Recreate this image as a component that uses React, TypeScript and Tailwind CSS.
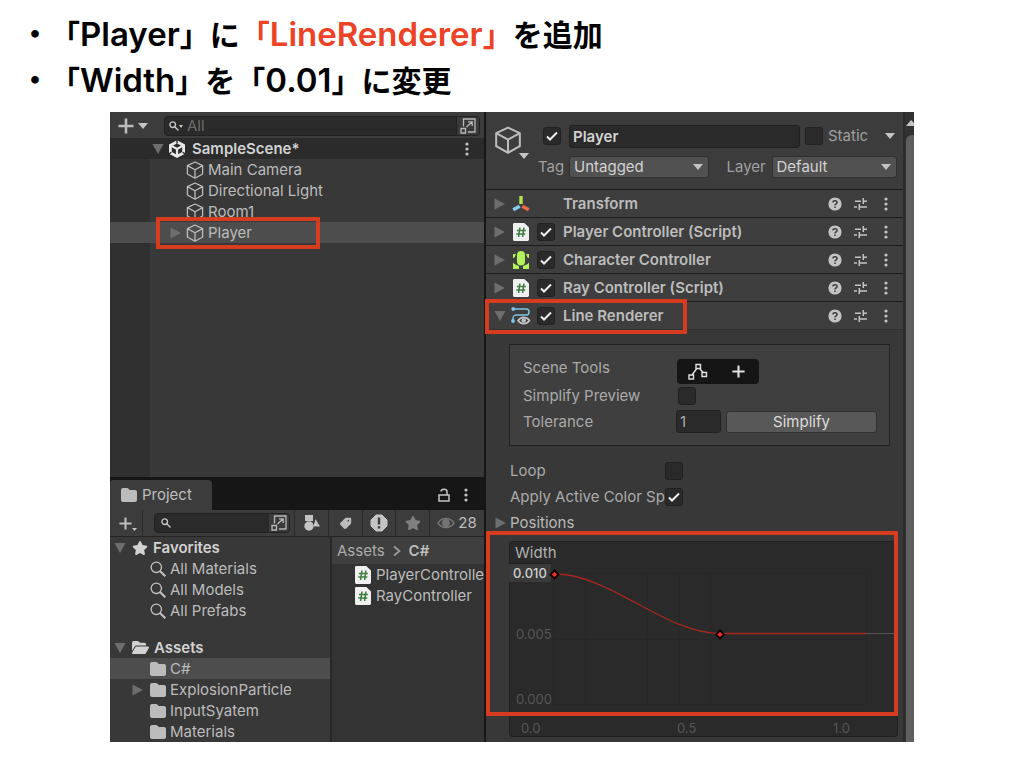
import type { ReactNode } from "react";
import { FaFolder, FaFolderOpen, FaStar, FaTag } from "react-icons/fa6";

type IconProps = { className?: string };

type Component = {
  name: string;
  icon: ReactNode;
  toggle: boolean;
  open?: boolean;
};

const Cube = ({ className = "size-[18px]" }: IconProps) => (
  <svg viewBox="0 0 18 18" className={`shrink-0 ${className}`} fill="none" stroke="currentColor" strokeWidth="1.3" strokeLinejoin="round">
    <path d="M9 1 16.6 4.6V13L9 17.2 1.4 13V4.6ZM1.4 4.6 9 8.8l7.6-4.2M9 8.8v8.4" />
  </svg>
);

const Arrow = ({ open = false }: { open?: boolean }) => (
  <svg viewBox="0 0 12 12" className="size-3 shrink-0 fill-[#6e6e6e]">
    <path d={open ? "M.5 1h11L6 11z" : "M.5 .5v11L11 6z"} />
  </svg>
);

const Caret = ({ className = "" }: IconProps) => (
  <svg viewBox="0 0 10 6" className={`w-[10px] h-[6px] shrink-0 fill-[#c4c4c4] ${className}`}>
    <path d="M0 0h10L5 6z" />
  </svg>
);

const Plus = ({ className = "size-4" }: IconProps) => (
  <svg viewBox="0 0 16 16" className={`shrink-0 ${className}`} stroke="currentColor" strokeWidth="2.6">
    <path d="M8 .5v15M.5 8h15" />
  </svg>
);

const Kebab = () => (
  <svg viewBox="0 0 4 14" className="w-1 h-[14px] shrink-0 fill-[#c4c4c4]">
    <circle cx="2" cy="2" r="1.6" />
    <circle cx="2" cy="7" r="1.6" />
    <circle cx="2" cy="12" r="1.6" />
  </svg>
);

const Presets = () => (
  <svg viewBox="0 0 14 14" className="size-[14px] shrink-0" stroke="#c4c4c4" strokeWidth="1.5">
    <path d="M1 4.2h6M9.3 4.2H13M9.3 1v6M0 10h3M5.3 10H13M5.3 7v6" />
  </svg>
);

const Help = () => (
  <svg viewBox="0 0 14 14" className="size-[14px] shrink-0">
    <circle cx="7" cy="7" r="6.6" fill="#c4c4c4" />
    <path d="M4.9 5.4C5 3.2 9.1 3.2 9.1 5.5 9.1 6.9 7 6.9 7 8.5M7 9.5v1.6" fill="none" stroke="#3e3e3e" strokeWidth="1.5" />
  </svg>
);

const UnityLogo = () => (
  <svg viewBox="0 0 18 18" className="size-[18px] shrink-0" fill="none">
    <path d="M9 1.8 15.6 5.4v7.4L9 16.4l-6.600-3.600V5.400z" stroke="#e8e8e8" strokeWidth="2.800" />
    <path d="M3 5.600 9 9l6-3.400M9 9v7" stroke="#e8e8e8" strokeWidth="2.200" />
    <path d="M9 0v3.400M0 14.200l3.400-1.800M18 14.200l-3.400-1.800" stroke="#2b2b2b" strokeWidth="1.400" />
  </svg>
);

const ScriptIcon = () => (
  <svg viewBox="0 0 18 20" className="w-[18px] h-5 shrink-0">
    <path d="M2.5 1h9.8L17 5.4V17.6A1.4 1.4 0 0 1 15.6 19H2.5A1.4 1.4 0 0 1 1 17.6V2.4A1.4 1.4 0 0 1 2.5 1z" fill="#f0f0f0" />
    <path d="M7.9 5.5 6.6 15M11.9 5.5 10.6 15M4.9 8.4h9M4.3 12h9" stroke="#3c7d3e" strokeWidth="1.5" />
  </svg>
);

const TransformIcon = () => (
  <svg viewBox="0 0 18 18" className="size-[18px] shrink-0" strokeWidth="3.4">
    <path d="M9 1v8" stroke="#b4e34d" />
    <path d="m7.7 11.2-6.5 3.6" stroke="#85cdf2" />
    <path d="m10.3 11.2 6.5 3.6" stroke="#ee6b43" />
  </svg>
);

const CharacterIcon = () => (
  <svg viewBox="0 0 18 20" className="w-[18px] h-5 shrink-0 fill-[#b4f25c]">
    <rect x="5" y="1" width="8" height="14.500" rx="4" />
    <path d="M1 4h3L2.6 7.4 1 8zM17 4h-3l1.4 3.4L17 8zM1 12.500l1.400 1.500 4.600 2v3H1zM17 12.500l-1.400 1.500-4.600 2v3h6z" />
  </svg>
);

const LineIcon = () => (
  <svg viewBox="0 0 20 20" className="size-5 shrink-0" fill="none">
    <path d="M2 3h13.5c3.3 0 3.3 6 0 6H5C2.4 9 1.9 10.5 1.9 14.5" stroke="#7fc4ea" strokeWidth="1.5" />
    <circle cx="2.2" cy="3" r="1.9" fill="#7fc4ea" />
    <circle cx="2" cy="15" r="1.9" fill="#7fc4ea" />
    <path d="M7 14.5c3-4.3 8.500-4.300 11.500 0-3 4.300-8.500 4.300-11.500 0z" fill="#3e3e3e" stroke="#c4c4c4" strokeWidth="1.700" />
    <circle cx="12.7" cy="14.5" r="2.2" fill="#c4c4c4" />
  </svg>
);

const Search = ({ className = "size-[10px]" }: IconProps) => (
  <svg viewBox="0 0 10 10" className={`shrink-0 ${className}`} fill="none" stroke="#c4c4c4" strokeWidth="1.4">
    <circle cx="3.7" cy="3.7" r="2.8" />
    <path d="m5.8 5.8 3.7 3.7" />
  </svg>
);

const Magnifier = () => (
  <svg viewBox="0 0 16 16" className="size-4 shrink-0" fill="none" stroke="#c4c4c4">
    <circle cx="6.3" cy="6.3" r="5.2" strokeWidth="1.3" />
    <path d="m10 10 5.3 5.3" strokeWidth="2" />
  </svg>
);

const Popout = () => (
  <svg viewBox="0 0 16 16" className="size-4 shrink-0" fill="none" stroke="#b8b8b8" strokeWidth="1.3">
    <path d="M3.5 8.5V1H15v13H8M1 10.5h4.5V15H1zM6.5 9 12 4M8 3.8h4.2V8" />
  </svg>
);

const Check = ({ label, checked = false }: { label: string; checked?: boolean }) => (
  <span className="relative flex size-[18px] shrink-0">
    <input
      type="checkbox"
      aria-label={label}
      defaultChecked={checked}
      className="peer size-full appearance-none rounded-[3px] border border-[#212121] bg-[#2a2a2a]"
    />
    <svg viewBox="0 0 18 18" className="pointer-events-none absolute inset-0 hidden peer-checked:block" fill="none" stroke="#eee" strokeWidth="2">
      <path d="m4 9.5 3 3 7-7" />
    </svg>
  </span>
);

const Dropdown = ({ id, value, className }: { id: string; value: string; className: string }) => (
  <span className={`relative flex items-center min-w-0 ${className}`}>
    <select id={id} className="h-[22px] w-full appearance-none rounded-[3px] border border-[#303030] bg-[#515151] pl-1 text-[#d2d2d2]">
      <option>{value}</option>
    </select>
    <Caret className="pointer-events-none absolute right-[6px]" />
  </span>
);

const objects = ["Main Camera", "Directional Light", "Room1", "Player"];
const searches = ["All Materials", "All Models", "All Prefabs"];
const folders = ["C#", "ExplosionParticle", "InputSyatem", "Materials"];
const scripts = ["PlayerController", "RayController"];

const components: Component[] = [
  { name: "Transform", icon: <TransformIcon />, toggle: false },
  { name: "Player Controller (Script)", icon: <ScriptIcon />, toggle: true },
  { name: "Character Controller", icon: <CharacterIcon />, toggle: true },
  { name: "Ray Controller (Script)", icon: <ScriptIcon />, toggle: true },
  { name: "Line Renderer", icon: <LineIcon />, toggle: true, open: true },
];

const Hierarchy = () => (
  <section className="flex flex-1 flex-col bg-[#383838]">
    <div className="flex h-[26px] items-center bg-[#3c3c3c] pl-2 pr-1">
      <button aria-label="Create" className="flex items-center gap-1 pt-[2px]">
        <Plus />
        <Caret />
      </button>
      <div className="ml-4 mt-[2px] flex h-5 flex-1 items-center overflow-hidden rounded-[4px] border border-[#212121] bg-[#2a2a2a] pl-1">
        <Search />
        <svg viewBox="0 0 4 3" className="h-[3px] w-1 fill-[#c4c4c4]">
          <path d="M0 0h4L2 3z" />
        </svg>
        <input aria-label="Search hierarchy" placeholder="All" className="ml-1 min-w-0 flex-1 placeholder:text-[#6c6c6c]" />
        <button aria-label="Open search window" className="flex h-full items-center border-l border-[#212121] bg-[#3a3a3a] px-[3px]">
          <Popout />
        </button>
      </div>
    </div>
    <div className="flex h-[21px] items-center bg-[#2b2b2b] pl-[42px] pr-[15px] font-semibold text-[#d2d2d2]">
      <Arrow open />
      <span className="ml-1 flex">
        <UnityLogo />
      </span>
      <span className="ml-[6px] flex-1">SampleScene*</span>
      <Kebab />
    </div>
    <ul className="flex-1 bg-linear-to-r from-[#303030] from-[40px] to-[#383838] to-[40px]">
      {objects.map((name) => (
        <li key={name} className={`relative flex h-[21px] items-center pl-[60px] ${name === "Player" ? "bg-[#4d4d4d]" : ""}`}>
          <span className="flex w-4">{name === "Player" && <Arrow />}</span>
          <Cube />
          <span className="ml-1">{name}</span>
          {name === "Player" && <span className="absolute -top-[5px] left-[46px] h-8 w-[164px] border-4 border-[#d53c20]" />}
        </li>
      ))}
    </ul>
  </section>
);

const Project = () => (
  <section>
    <div className="flex h-[33px] items-end bg-[#161616]">
      <button className="flex h-[30px] items-center gap-[5px] rounded-t-[4px] bg-[#3c3c3c] pl-[11px] pr-5">
        <FaFolder className="size-4" />
        Project
      </button>
      <div className="ml-auto flex h-[30px] items-center gap-[14px] pr-4">
        <svg viewBox="0 0 12 14" className="h-[14px] w-3" fill="none" stroke="#c4c4c4" strokeWidth="1.5">
          <path d="M1 7h10v6H1zM3 3.500C3 .5 9 .5 9 3.500V7" />
        </svg>
        <Kebab />
      </div>
    </div>
    <div className="flex h-[27px] items-center border-b border-[#242424] bg-[#3c3c3c]">
      <button aria-label="Add asset" className="flex h-full w-[33px] items-center border-r border-[#2a2a2a] pl-[9px]">
        <Plus className="size-[13px]" />
        <Caret className="mt-3 w-[5px]! h-[3px]!" />
      </button>
      <div className="ml-[11px] mr-1 flex h-5 min-w-0 flex-1 items-center overflow-hidden rounded-[4px] border border-[#212121] bg-[#2a2a2a] pl-[6px]">
        <Search />
        <input aria-label="Search project" className="min-w-0 flex-1" />
        <button aria-label="Open project search" className="flex h-full items-center bg-[#3a3a3a] px-[2px]">
          <Popout />
        </button>
      </div>
      <button aria-label="Filter by type" className="flex h-full w-[34px] items-center justify-center border-l border-[#2a2a2a]">
        <svg viewBox="0 0 16 16" className="size-4 fill-[#c4c4c4]">
          <path d="M1 0h8v6H1zM11.5 4 16 11.5H9.5z" />
          <circle cx="5" cy="11" r="4.7" />
        </svg>
      </button>
      <button aria-label="Filter by label" className="flex h-full w-[34px] items-center justify-center border-l border-[#2a2a2a]">
        <FaTag className="size-[13px] rotate-90" />
      </button>
      <button aria-label="Filter by import log" className="flex h-full w-[33px] items-center justify-center border-l border-[#2a2a2a]">
        <svg viewBox="0 0 18 18" className="size-[18px]">
          <path d="M6 1h6l5 5v6l-5 5H6l-5-5V6z" fill="#c4c4c4" stroke="#c4c4c4" strokeLinejoin="round" />
          <path d="M9 3.5v7M9 12.300v2.200" stroke="#3c3c3c" strokeWidth="2.4" />
        </svg>
      </button>
      <button aria-label="Save search" className="flex h-full w-[34px] items-center justify-center border-l border-[#2a2a2a] text-[#808080]">
        <FaStar className="size-4" />
      </button>
      <button className="flex h-full w-[55px] items-center justify-center gap-[3px] border-l border-[#2a2a2a]">
        <svg viewBox="0 0 18 12" className="h-3 w-[18px]" fill="none" stroke="#757575" strokeWidth="1.4">
          <path d="M1 6c4-6 12-6 16 0-4 6-12 6-16 0z" />
          <circle cx="9" cy="6" r="3.2" fill="#757575" />
        </svg>
        28
      </button>
    </div>
    <div className="grid h-[205px] grid-cols-[222fr_152fr] overflow-hidden">
      <ul className="border-r-2 border-[#282828]">
        <li className="flex h-[21px] items-center pl-1 font-semibold text-[#d2d2d2]">
          <Arrow open />
          <FaStar className="ml-[6px] size-4" />
          <span className="ml-[5px]">Favorites</span>
        </li>
        {searches.map((name) => (
          <li key={name} className="flex h-[21px] items-center gap-1 pl-10">
            <Magnifier />
            {name}
          </li>
        ))}
        <li className="mt-4 flex h-[21px] items-center pl-1 font-semibold text-[#d2d2d2]">
          <Arrow open />
          <FaFolderOpen className="ml-[6px] size-[17px]" />
          <span className="ml-[5px]">Assets</span>
        </li>
        {folders.map((name) => (
          <li key={name} className={`flex h-[21px] items-center pl-[22px] ${name === "C#" ? "bg-[#4d4d4d]" : ""}`}>
            <span className="flex w-[18px]">{name === "ExplosionParticle" && <Arrow />}</span>
            <FaFolder className="mr-1 size-4" />
            {name}
          </li>
        ))}
      </ul>
      <div className="min-w-0 bg-[#333333]">
        <nav className="flex h-[27px] items-center gap-2 bg-[#3f3f3f] pl-[5px]">
          <a href="#assets" className="text-[#ababab]">Assets</a>
          <svg viewBox="0 0 8 10" className="h-[10px] w-2" fill="none" stroke="#9a9a9a" strokeWidth="1.8">
            <path d="m1 .5 5.500 4.500L1 9.500" />
          </svg>
          <a href="#csharp" className="font-semibold">C#</a>
        </nav>
        <ul>
          {scripts.map((name) => (
            <li key={name} className="flex h-[21px] items-center gap-1 overflow-hidden pl-[22px]">
              <ScriptIcon />
              {name}
            </li>
          ))}
        </ul>
      </div>
    </div>
  </section>
);

const WidthCurve = () => (
  <svg viewBox="0 0 389 196" className="block w-full rounded-[4px] bg-[#2a2a2a]" fill="none">
    <rect x=".5" y=".5" width="388" height="195" rx="3.5" stroke="#202020" />
    <path d="M0 22.500h43" stroke="#1f1f1f" />
    <path d="M44.5 32v131M76.5 32v131M138.5 32v131M170.5 32v131M201.5 32v131M357.5 32v131M44 32.5h313M44 98.5h313M44 163.5h313" stroke="#272727" />
    <rect x="0" y="23" width="42" height="18" fill="#3a3a3a" />
    <path d="M356 92.5h33" stroke="#555" />
    <path d="M46 33c55 0 110 59.5 165 59.5h146" stroke="#a8261e" strokeWidth="1.3" />
    <path d="m45.5 29.500 4 4-4 4-4-4zM211 89.500l4 4-4 4-4-4z" fill="#ee3324" stroke="#140000" strokeWidth="1.8" />
    <g className="fill-[#565656] text-[13px]">
      <text x="6" y="17" className="fill-[#b0b0b0] text-[15px]">Width</text>
      <text x="4" y="37" className="fill-[#d0d0d0] font-medium">0.010</text>
      <text x="7" y="98">0.005</text>
      <text x="7" y="163">0.000</text>
      <text x="12" y="192">0.0</text>
      <text x="168" y="192">0.5</text>
      <text x="324" y="192">1.0</text>
    </g>
  </svg>
);

const Inspector = () => (
  <section className="grid grid-cols-[1fr_11px]">
    <div className="min-w-0 bg-[#383838]">
      <header className="flex h-[77px] bg-[#3c3c3c] pl-2 pr-[6px] pt-3">
        <div className="relative w-11 pt-[2px]">
          <Cube className="size-[28px]" />
          <Caret className="absolute left-[25px] top-[29px]" />
        </div>
        <div className="min-w-0 flex-1">
          <div className="flex h-6 items-center pl-[5px]">
            <Check label="Active" checked />
            <input
              aria-label="Object name"
              defaultValue="Player"
              className="ml-2 h-[23px] min-w-0 flex-1 rounded-[3px] border border-[#212121] bg-[#2a2a2a] pl-[3px] font-semibold text-[#d2d2d2]"
            />
            <span className="ml-[5px] flex">
              <Check label="Static" />
            </span>
            <span className="ml-[5px] w-[57px] text-[#a0a0a0]">Static</span>
            <Caret className="mr-[2px]" />
          </div>
          <div className="mt-2 flex items-center">
            <label htmlFor="tag" className="w-[31px] shrink-0 text-[#a0a0a0]">Tag</label>
            <Dropdown id="tag" value="Untagged" className="flex-[139]" />
            <label htmlFor="layer" className="ml-[18px] w-[45px] shrink-0 text-[#a0a0a0]">Layer</label>
            <Dropdown id="layer" value="Default" className="flex-[125]" />
          </div>
        </div>
      </header>
      {components.map(({ name, icon, toggle, open }) => (
        <div key={name} className="relative flex h-7 items-center border-t border-[#1c1c1c] bg-[#3e3e3e] pl-2 pr-[15px]">
          <Arrow open={open} />
          <span className="ml-[5px] flex w-5 justify-center">{icon}</span>
          <span className="ml-[6px] flex w-[26px]">{toggle && <Check label={name} checked />}</span>
          <h2 className="flex-1 font-semibold">{name}</h2>
          <div className="flex items-center gap-3">
            <Help />
            <Presets />
            <span className="ml-1 flex">
              <Kebab />
            </span>
          </div>
          {open && <span className="absolute -left-px -top-[3px] h-[35px] w-[202px] border-4 border-[#d53c20]" />}
        </div>
      ))}
      <div className="border-t border-[#303030] pl-[23px] pt-[14px] text-[#aaaaaa]">
        <div className="mr-[13px] border border-[#222222] bg-[#3f3f3f] pb-3 pl-[13px] pr-3 pt-[14px]">
          <div className="flex h-[25px]">
            <span className="w-[154px] leading-[18px]">Scene Tools</span>
            <div className="grid w-[82px] grid-cols-2 place-items-center rounded-[4px] bg-[#151515] text-[#e0e0e0]">
              <button aria-label="Edit points">
                <svg viewBox="0 0 20 18" className="h-[18px] w-5" fill="none" stroke="currentColor" strokeWidth="1.4">
                  <path d="M1 12h4.5v4H1zM8 1.5h4.5v4H8zM14 9.5h4.5v4H14zM4 12l4.800-6.500M11.500 5.500l3.800 4" />
                </svg>
              </button>
              <button aria-label="Add points">
                <Plus className="size-[13px]" />
              </button>
            </div>
          </div>
          <div className="flex h-6 items-center">
            <span className="w-[155px]">Simplify Preview</span>
            <Check label="Simplify Preview" />
          </div>
          <div className="mt-[2px] flex h-[23px] items-center">
            <label htmlFor="tolerance" className="w-[153px]">Tolerance</label>
            <input id="tolerance" defaultValue="1" className="h-[23px] w-[45px] rounded-[3px] border border-[#212121] bg-[#2a2a2a] pl-[3px]" />
            <button className="ml-[5px] h-[22px] flex-1 rounded-[3px] border border-[#303030] bg-[#585858] leading-5 text-[#dcdcdc]">Simplify</button>
          </div>
        </div>
        <div className="mt-3 flex h-[26px] items-center">
          <span className="w-[156px] pl-px">Loop</span>
          <Check label="Loop" />
        </div>
        <div className="flex h-[26px] items-center">
          <span className="w-[156px] overflow-hidden whitespace-nowrap pl-px">Apply Active Color Space</span>
          <Check label="Apply Active Color Space" checked />
        </div>
        <div className="-ml-[14px] flex h-[26px] items-center gap-[3px] text-[#b8b8b8]">
          <Arrow />
          Positions
        </div>
        <div className="relative mr-[5px] pb-[5px] pt-[5px]">
          <WidthCurve />
          <span className="absolute -left-[23px] -top-[5px] bottom-[26px] right-0 border-4 border-[#d53c20]" />
        </div>
      </div>
    </div>
    <div className="flex flex-col border-l-2 border-[#2c2c2c] bg-[#323232]">
      <div className="flex h-[23px] justify-end overflow-hidden pt-2">
        <svg viewBox="0 0 8 6" className="h-[6px] w-2 fill-[#c4c4c4]">
          <path d="M0 6 5 0l3 3v3z" />
        </svg>
      </div>
      <div className="ml-px flex-1 rounded-tl-[6px] bg-[#5f5f5f]" />
    </div>
  </section>
);

const App = () => {
  return (
    <main className="min-h-screen bg-white pb-6">
      <ul className="h-[112px] pl-[20px] pt-3 font-['Inter','Noto_Sans_CJK_JP',sans-serif] text-[30px] font-semibold leading-[45px] text-black [text-spacing-trim:space-all]">
        <li className="flex whitespace-nowrap">
          <span>・</span>
          <p>
            「<span className="text-[33px]">Player</span>」に
            <span className="text-[#ec4327]">
              「<span className="text-[33px]">LineRenderer</span>」
            </span>
            を追加
          </p>
        </li>
        <li className="flex whitespace-nowrap">
          <span>・</span>
          <p>
            「<span className="text-[33px]">Width</span>」を「<span className="text-[33px]">0.01</span>」に変更
          </p>
        </li>
      </ul>
      <div className="mx-[110px] grid grid-cols-[374fr_428fr] gap-[2px] overflow-hidden bg-[#161616] font-['Inter',sans-serif] text-[15px] leading-5 text-[#bcbcbc]">
        <div className="flex min-w-0 flex-col bg-[#383838]">
          <Hierarchy />
          <Project />
        </div>
        <Inspector />
      </div>
    </main>
  );
};

export default App;
